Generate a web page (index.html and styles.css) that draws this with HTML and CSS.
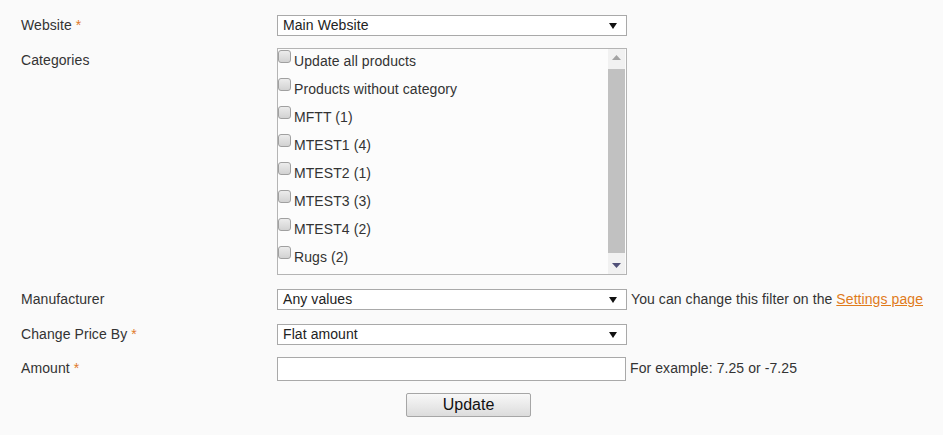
FILE: index.html
```html
<!DOCTYPE html>
<html>
<head>
<meta charset="utf-8">
<link rel="stylesheet" href="styles.css">
</head>
<body>
<div class="form">
  <div class="row r1">
    <div class="label">Website <span class="req">*</span></div>
    <div class="select"><span class="val">Main Website</span><svg class="arrow" width="8" height="6" viewBox="0 0 8 6"><path d="M0 0H8L4 6Z" fill="#111"/></svg></div>
  </div>
  <div class="row r2">
    <div class="label">Categories</div>
    <div class="listbox">
      <div class="items">
        <div class="item"><span class="cb"></span><span>Update all products</span></div>
        <div class="item"><span class="cb"></span><span>Products without category</span></div>
        <div class="item"><span class="cb"></span><span>MFTT (1)</span></div>
        <div class="item"><span class="cb"></span><span>MTEST1 (4)</span></div>
        <div class="item"><span class="cb"></span><span>MTEST2 (1)</span></div>
        <div class="item"><span class="cb"></span><span>MTEST3 (3)</span></div>
        <div class="item"><span class="cb"></span><span>MTEST4 (2)</span></div>
        <div class="item"><span class="cb"></span><span>Rugs (2)</span></div>
      </div>
      <div class="scrollbar">
        <div class="sbtn"><svg width="9" height="5" viewBox="0 0 9 5"><path d="M0 5H9L4.5 0Z" fill="#a3a3a3"/></svg></div>
        <div class="track"><div class="thumb"></div></div>
        <div class="sbtn"><svg width="9" height="5" viewBox="0 0 9 5"><path d="M0 0H9L4.5 5Z" fill="#505078"/></svg></div>
      </div>
    </div>
  </div>
  <div class="row r3">
    <div class="label">Manufacturer</div>
    <div class="select"><span class="val">Any values</span><svg class="arrow" width="8" height="6" viewBox="0 0 8 6"><path d="M0 0H8L4 6Z" fill="#111"/></svg></div>
    <div class="note">You can change this filter on the <a href="#" class="link">Settings page</a></div>
  </div>
  <div class="row r4">
    <div class="label">Change Price By <span class="req">*</span></div>
    <div class="select"><span class="val">Flat amount</span><svg class="arrow" width="8" height="6" viewBox="0 0 8 6"><path d="M0 0H8L4 6Z" fill="#111"/></svg></div>
  </div>
  <div class="row r5">
    <div class="label">Amount <span class="req">*</span></div>
    <div class="input"></div>
    <div class="note">For example: 7.25 or -7.25</div>
  </div>
  <div class="btnrow">
    <button class="btn">Update</button>
  </div>
</div>
</body>
</html>
```
FILE: styles.css
```css
html, body {
  margin: 0;
  padding: 0;
  background: #fafafa;
}
body {
  font-family: "Liberation Sans", Arial, sans-serif;
  font-size: 14px;
  color: #333;
  letter-spacing: 0.08px;
}
.form {
  padding: 15px 0 0 21px;
}
.row {
  display: flex;
  align-items: flex-start;
}
.label {
  width: 256px;
  flex: none;
  line-height: 21px;
  color: #333;
}
.req {
  color: #e0792a;
}
.r1 .label { line-height: 20px; }
.r2 { margin-top: 12px; }
.r2 .label { padding-top: 2px; }
.r3 { margin-top: 14px; }
.r4 { margin-top: 14px; }
.r5 { margin-top: 12px; }
.r5 .label { line-height: 22px; }
.select {
  box-sizing: border-box;
  width: 350px;
  height: 21px;
  border: 1px solid #a9a9a9;
  background: #fff;
  display: flex;
  align-items: center;
  justify-content: space-between;
  padding: 0 9px 0 5px;
  color: #222;
  flex: none;
}
.val { line-height: 19px; }
.arrow { display: block; }
.note {
  margin-left: 4px;
  line-height: 20px;
  color: #333;
}
.r5 .note { line-height: 23px; }
.link {
  color: #e07b1a;
  text-decoration: underline;
}
.listbox {
  box-sizing: border-box;
  width: 350px;
  height: 227px;
  border: 1px solid #b4b4b4;
  background: #fcfcfc;
  display: flex;
  flex: none;
}
.items {
  flex: 1;
}
.item {
  height: 28px;
  display: flex;
  align-items: flex-start;
  color: #333;
}
.item span:last-child {
  line-height: 22px;
  padding-top: 1px;
}
.cb {
  box-sizing: border-box;
  width: 13px;
  height: 13px;
  margin-top: 1px;
  margin-right: 3px;
  border: 1px solid #a0a0a0;
  border-radius: 3px;
  background: linear-gradient(#ececec, #d2d2d2);
  flex: none;
}
.scrollbar {
  width: 17px;
  background: #f1f1f1;
  display: flex;
  flex-direction: column;
  margin-right: 1px;
}
.sbtn {
  height: 17px;
  display: flex;
  align-items: center;
  justify-content: center;
}
.sbtn svg { display: block; }
.track {
  flex: 1;
  padding: 3px 0 4px;
  display: flex;
}
.thumb {
  flex: 1;
  background: #c1c1c1;
}
.input {
  box-sizing: border-box;
  width: 349px;
  height: 24px;
  border: 1px solid #a9a9a9;
  background: #fff;
  flex: none;
}
.btnrow {
  margin-top: 12px;
  padding-left: 385px;
}
.btn {
  box-sizing: border-box;
  width: 125px;
  height: 24px;
  border: 1px solid #a6a6a6;
  border-radius: 2px;
  background: linear-gradient(#f8f8f8, #dcdcdc);
  font-family: "Liberation Sans", Arial, sans-serif;
  font-size: 16px;
  color: #111;
  padding: 0;
  line-height: 22px;
}
```
